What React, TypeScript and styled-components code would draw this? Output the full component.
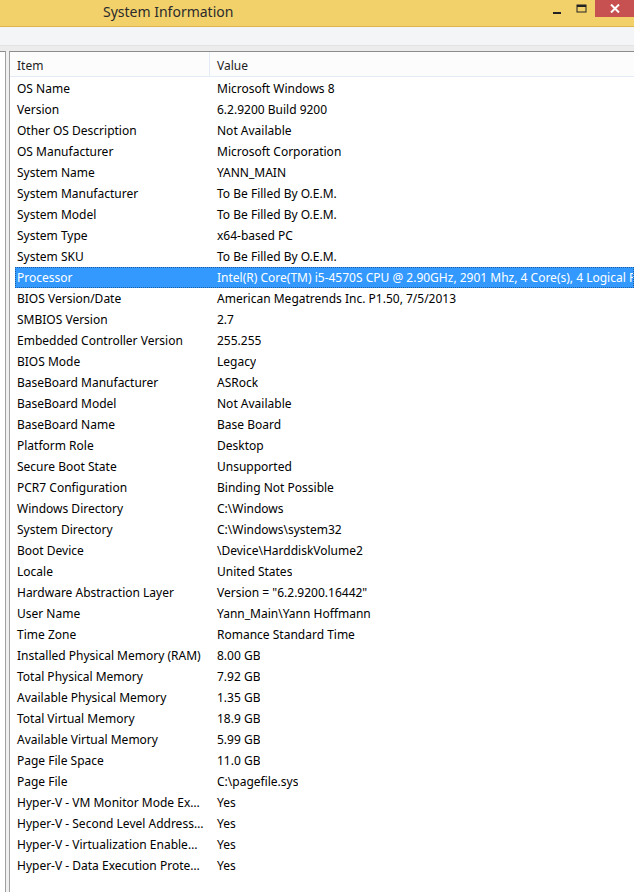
import styled, { createGlobalStyle } from 'styled-components';

type Row = [string, string];

const rows: Row[] = [
  ['OS Name', 'Microsoft Windows 8'],
  ['Version', '6.2.9200 Build 9200'],
  ['Other OS Description', 'Not Available'],
  ['OS Manufacturer', 'Microsoft Corporation'],
  ['System Name', 'YANN_MAIN'],
  ['System Manufacturer', 'To Be Filled By O.E.M.'],
  ['System Model', 'To Be Filled By O.E.M.'],
  ['System Type', 'x64-based PC'],
  ['System SKU', 'To Be Filled By O.E.M.'],
  ['Processor', 'Intel(R) Core(TM) i5-4570S CPU @ 2.90GHz, 2901 Mhz, 4 Core(s), 4 Logical Processor(s)'],
  ['BIOS Version/Date', 'American Megatrends Inc. P1.50, 7/5/2013'],
  ['SMBIOS Version', '2.7'],
  ['Embedded Controller Version', '255.255'],
  ['BIOS Mode', 'Legacy'],
  ['BaseBoard Manufacturer', 'ASRock'],
  ['BaseBoard Model', 'Not Available'],
  ['BaseBoard Name', 'Base Board'],
  ['Platform Role', 'Desktop'],
  ['Secure Boot State', 'Unsupported'],
  ['PCR7 Configuration', 'Binding Not Possible'],
  ['Windows Directory', 'C:\\Windows'],
  ['System Directory', 'C:\\Windows\\system32'],
  ['Boot Device', '\\Device\\HarddiskVolume2'],
  ['Locale', 'United States'],
  ['Hardware Abstraction Layer', 'Version = "6.2.9200.16442"'],
  ['User Name', 'Yann_Main\\Yann Hoffmann'],
  ['Time Zone', 'Romance Standard Time'],
  ['Installed Physical Memory (RAM)', '8.00 GB'],
  ['Total Physical Memory', '7.92 GB'],
  ['Available Physical Memory', '1.35 GB'],
  ['Total Virtual Memory', '18.9 GB'],
  ['Available Virtual Memory', '5.99 GB'],
  ['Page File Space', '11.0 GB'],
  ['Page File', 'C:\\pagefile.sys'],
  ['Hyper-V - VM Monitor Mode Extensions', 'Yes'],
  ['Hyper-V - Second Level Address Translation Extensions', 'Yes'],
  ['Hyper-V - Virtualization Enabled in Firmware', 'Yes'],
  ['Hyper-V - Data Execution Protection', 'Yes'],
];

export default function App() {
  return (
    <Window>
      <GlobalStyle />
      <TitleBar>
        <Title>System Information</Title>
        <Controls>
          <CtrlButton aria-label="minimize">
            <svg width="10" height="10" viewBox="0 0 10 10">
              <rect x="1" y="8" width="8" height="2" fill="#222" />
            </svg>
          </CtrlButton>
          <CtrlButton aria-label="maximize">
            <svg width="11" height="10" viewBox="0 0 11 10">
              <rect x="1" y="1" width="9" height="7" fill="none" stroke="#222" strokeWidth="1" />
              <rect x="1" y="1" width="9" height="2" fill="#222" />
            </svg>
          </CtrlButton>
          <CloseButton aria-label="close">
            <svg width="10" height="9" viewBox="0 0 10 9">
              <path d="M1 0.5 L9 8.5 M9 0.5 L1 8.5" stroke="#fff" strokeWidth="2" />
            </svg>
          </CloseButton>
        </Controls>
      </TitleBar>

      <MenuBand />
      <Divider />

      <Body>
        <TreePane />
        <ListPane>
          <HeaderRow>
            <HeaderCell $first>Item</HeaderCell>
            <HeaderCell>Value</HeaderCell>
          </HeaderRow>
          {rows.map(([item, value]) => (
            <DataRow key={item} $selected={item === 'Processor'}>
              <ItemCell>{item}</ItemCell>
              <ValueCell>{value}</ValueCell>
            </DataRow>
          ))}
        </ListPane>
      </Body>
    </Window>
  );
}

const GlobalStyle = createGlobalStyle`
  html, body {
    margin: 0;
    padding: 0;
    overflow: hidden;
  }
  body {
    font-family: "Noto Sans", "Open Sans", "DejaVu Sans", sans-serif;
  }
  * {
    box-sizing: border-box;
  }
`;

const Window = styled.div`
  width: 634px;
  height: 892px;
  overflow: hidden;
  background: #ffffff;
  display: flex;
  flex-direction: column;
`;

const TitleBar = styled.div`
  height: 27px;
  flex: none;
  background: #f2d16b;
  border-bottom: 1px solid #dcb64d;
  display: flex;
  align-items: flex-start;
`;

const Title = styled.div`
  margin-left: 103px;
  margin-top: 1px;
  font-size: 14px;
  line-height: 22px;
  color: #2b2b2b;
`;

const Controls = styled.div`
  margin-left: auto;
  display: flex;
  align-items: flex-start;
`;

const CtrlButton = styled.div`
  width: 24px;
  height: 17px;
  display: flex;
  align-items: center;
  justify-content: center;
`;

const CloseButton = styled.div`
  width: 39px;
  height: 17px;
  margin-left: 2px;
  background: #c75050;
  display: flex;
  align-items: center;
  justify-content: center;
`;

const MenuBand = styled.div`
  height: 18px;
  flex: none;
  background: #f4f5f7;
`;

const Divider = styled.div`
  height: 6px;
  flex: none;
  background: #ececec;
  border-top: 1px solid #e3e3e3;
`;

const Body = styled.div`
  flex: 1;
  display: flex;
  gap: 3px;
  min-height: 0;
  background: #f0f0f0;
`;

const TreePane = styled.div`
  width: 6px;
  flex: none;
  background: #ffffff;
  border-top: 1px solid #8c8c8c;
  border-right: 1px solid #a0a0a0;
`;

const ListPane = styled.div`
  flex: 1;
  min-width: 0;
  background: #ffffff;
  border-top: 1px solid #8c8c8c;
  border-left: 1px solid #a0a0a0;
  overflow: hidden;
  font-size: 12px;
  color: #000;
`;

const HeaderRow = styled.div`
  display: flex;
  height: 25px;
  background: #fcfcfc;
  border-bottom: 1px solid #e3ebf6;
  margin-bottom: 1px;
`;

const HeaderCell = styled.div<{ $first?: boolean }>`
  width: ${(p) => (p.$first ? '200px' : 'auto')};
  flex: ${(p) => (p.$first ? 'none' : '1')};
  padding-left: 7px;
  padding-top: 3px;
  line-height: 21px;
  border-right: ${(p) => (p.$first ? '1px solid #e3ebf6' : 'none')};
  color: #1e1e1e;
`;

const DataRow = styled.div<{ $selected?: boolean }>`
  display: flex;
  height: 21px;
  align-items: center;
  white-space: nowrap;
  margin-left: 5px;
  background: ${(p) => (p.$selected ? '#3399ff' : 'transparent')};
  color: ${(p) => (p.$selected ? '#ffffff' : '#000000')};
  outline: ${(p) => (p.$selected ? '1px dotted #1a5ea8' : 'none')};
  outline-offset: -1px;
`;

const ItemCell = styled.div`
  width: 195px;
  flex: none;
  padding-left: 2px;
  padding-right: 6px;
  overflow: hidden;
  text-overflow: ellipsis;
`;

const ValueCell = styled.div`
  padding-left: 7px;
  overflow: hidden;
`;
